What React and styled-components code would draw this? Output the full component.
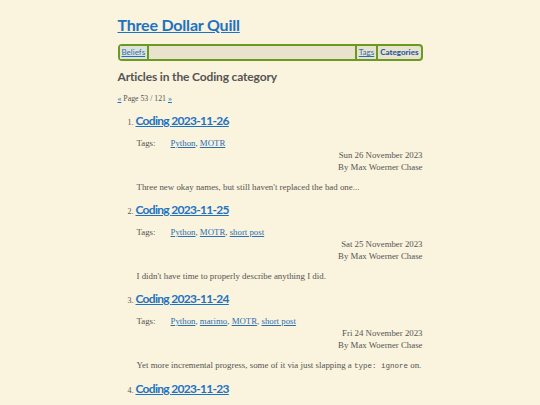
import React from 'react';
import styled, { createGlobalStyle } from 'styled-components';

const GlobalStyle = createGlobalStyle`
  html, body {
    margin: 0;
    padding: 0;
    background-color: #faf3dd;
  }
`;

const Page = styled.div`
  width: 305px;
  margin: 0 auto;
  padding-top: 13px;
  font-family: "Liberation Serif", serif;
  color: #555;
`;

const SiteTitle = styled.h1`
  margin: 0;
  font-family: Lato, sans-serif;
  font-size: 16px;
  font-weight: 700;
  letter-spacing: -0.2px;
  line-height: 24px;

  a {
    color: #1d72c2;
    text-decoration: underline;
  }
`;

const Nav = styled.nav`
  margin-top: 7px;
  display: flex;
  align-items: stretch;
  height: 13px;
  border: 2px solid #6b9a22;
  border-radius: 4px;
  background-color: #e9e2cc;
  font-family: Lato, sans-serif;
  font-size: 8px;
  line-height: 13px;
`;

const NavLink = styled.a`
  padding: 0 2px;
  color: ${props => (props.$current ? '#245d9c' : '#2a6fb3')};
  font-weight: ${props => (props.$current ? 900 : 400)};
  text-decoration: ${props => (props.$current ? 'none' : 'underline')};
  background-color: ${props => (props.$highlight ? '#dfe2da' : 'transparent')};
  border-left: ${props => (props.$left ? '2px solid #6b9a22' : 'none')};
  border-right: ${props => (props.$right ? '2px solid #6b9a22' : 'none')};
`;

const NavSpacer = styled.div`
  flex: 1;
`;

const Heading = styled.h2`
  margin: 7px 0 0;
  font-family: Lato, sans-serif;
  font-size: 12px;
  font-weight: 700;
  letter-spacing: -0.15px;
  line-height: 18px;
  color: #555;
`;

const Pager = styled.p`
  margin: 8px 0 0;
  font-size: 7.8px;
  line-height: 10px;
  color: #555;

  a {
    color: #1d72c2;
  }
`;

const ArticleList = styled.ol`
  margin: 8px 0 0;
  padding-left: 18px;
`;

const Article = styled.li`
  margin-bottom: 8px;

  &::marker {
    font-family: "Liberation Serif", serif;
    font-size: 8px;
    color: #555;
  }
`;

const ArticleTitle = styled.h3`
  margin: 0;
  font-family: Lato, sans-serif;
  font-size: 12px;
  font-weight: 700;
  letter-spacing: -0.7px;
  line-height: 18px;

  a {
    color: #1d72c2;
    text-decoration: underline;
  }
`;

const TagRow = styled.div`
  display: grid;
  grid-template-columns: 34px 1fr;
  margin-top: 7px;
  padding-left: 1px;
  font-size: 8.8px;
  line-height: 12px;

  a {
    color: #2a6fb3;
  }
`;

const Meta = styled.div`
  text-align: right;
  font-size: 8.8px;
  line-height: 12px;
  color: #555;
`;

const Summary = styled.p`
  margin: 8px 0 0;
  padding-left: 1px;
  font-size: 8.9px;
  line-height: 12px;
  color: #555;

  code {
    font-family: "Liberation Mono", monospace;
    font-size: 7.5px;
  }
`;

const articles = [
  {
    date: '2023-11-26',
    day: 'Sun 26 November 2023',
    tags: ['Python', 'MOTR'],
    summary: <>Three new okay names, but still haven't replaced the bad one...</>,
  },
  {
    date: '2023-11-25',
    day: 'Sat 25 November 2023',
    tags: ['Python', 'MOTR', 'short post'],
    summary: <>I didn't have time to properly describe anything I did.</>,
  },
  {
    date: '2023-11-24',
    day: 'Fri 24 November 2023',
    tags: ['Python', 'marimo', 'MOTR', 'short post'],
    summary: (
      <>
        Yet more incremental progress, some of it via just slapping a <code>type: ignore</code> on.
      </>
    ),
  },
  {
    date: '2023-11-23',
    day: 'Thu 23 November 2023',
    tags: ['Python', 'MOTR'],
    summary: <>More work.</>,
  },
];

const App = () => (
  <>
    <GlobalStyle />
    <Page>
      <SiteTitle>
        <a href="#">Three Dollar Quill</a>
      </SiteTitle>
      <Nav>
        <NavLink href="#" $highlight $right>Beliefs</NavLink>
        <NavSpacer />
        <NavLink href="#" $left $right>Tags</NavLink>
        <NavLink href="#" $current>Categories</NavLink>
      </Nav>
      <Heading>Articles in the Coding category</Heading>
      <Pager>
        <a href="#">«</a> Page 53 / 121 <a href="#">»</a>
      </Pager>
      <ArticleList>
        {articles.map(article => (
          <Article key={article.date}>
            <ArticleTitle>
              <a href="#">Coding {article.date}</a>
            </ArticleTitle>
            <TagRow>
              <span>Tags:</span>
              <span>
                {article.tags.map((tag, i) => (
                  <React.Fragment key={tag}>
                    {i > 0 && ', '}
                    <a href="#">{tag}</a>
                  </React.Fragment>
                ))}
              </span>
            </TagRow>
            <Meta>{article.day}</Meta>
            <Meta>By Max Woerner Chase</Meta>
            <Summary>{article.summary}</Summary>
          </Article>
        ))}
      </ArticleList>
    </Page>
  </>
);

export default App;
